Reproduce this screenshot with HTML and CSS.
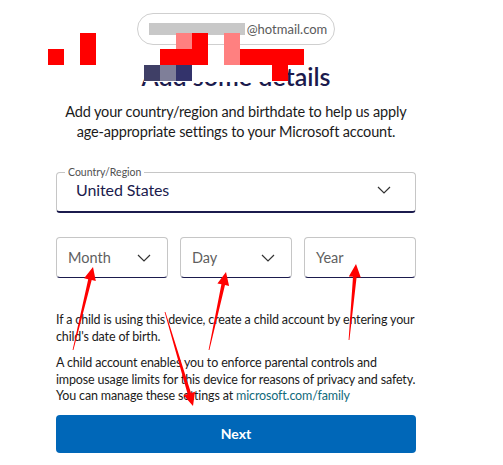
FILE: index.html
```html
<!DOCTYPE html>
<html lang="en">
  <head>
    <meta charset="UTF-8" />
    <title>Add details</title>
    <link rel="stylesheet" href="styles.css">
  </head>
  <body>
    <div class="page">
      <div class="identity">
        <span class="identity-hidden"></span>
        <span class="identity-mail">@hotmail.com</span>
      </div>

      <h1 class="title">Add some details</h1>

      <p class="intro">
        Add your country/region and birthdate to help us apply
        age-appropriate settings to your Microsoft account.
      </p>

      <fieldset class="country">
        <legend>Country/Region</legend>
        <div class="country-row">
          <span class="country-value">United States</span>
          <svg class="chevron" width="14" height="8" viewBox="0 0 14 8"><path d="M1 1l6 6 6-6" /></svg>
        </div>
      </fieldset>

      <div class="birth">
        <div class="birth-field">
          <span>Month</span>
          <svg class="chevron" width="14" height="8" viewBox="0 0 14 8"><path d="M1 1l6 6 6-6" /></svg>
        </div>
        <div class="birth-field">
          <span>Day</span>
          <svg class="chevron" width="14" height="8" viewBox="0 0 14 8"><path d="M1 1l6 6 6-6" /></svg>
        </div>
        <div class="birth-field">
          <span>Year</span>
        </div>
      </div>

      <p class="note note-first">
        If a child is using this device, create a child account by entering your
        child's date of birth.
      </p>
      <p class="note">
        A child account enables you to enforce parental controls and<br>
        impose usage limits for this device for reasons of privacy and safety.<br>
        You can manage these settings at <a href="#">microsoft.com/family</a>
      </p>

      <button class="next">Next</button>
    </div>

    <!-- redaction blocks laid over the header -->
    <div class="redact">
      <i style="left:48px;top:49px;width:16px;height:16px;background:#ff0000"></i>
      <i style="left:80px;top:33px;width:16px;height:32px;background:#ff0000"></i>
      <i style="left:144px;top:49px;width:144px;height:33px;background:#fff"></i>
      <i style="left:160px;top:49px;width:16px;height:16px;background:#ff0000"></i>
      <i style="left:176px;top:33px;width:16px;height:16px;background:#ff8080"></i>
      <i style="left:176px;top:49px;width:16px;height:16px;background:#ff0000"></i>
      <i style="left:192px;top:33px;width:16px;height:32px;background:#ff0000"></i>
      <i style="left:224px;top:33px;width:16px;height:32px;background:#ff8080"></i>
      <i style="left:240px;top:49px;width:64px;height:16px;background:#ff0000"></i>
      <i style="left:272px;top:65px;width:16px;height:16px;background:#ff0000"></i>
      <i style="left:144px;top:65px;width:16px;height:16px;background:#3f3f66"></i>
      <i style="left:160px;top:65px;width:16px;height:16px;background:#7f7f99"></i>
      <i style="left:176px;top:65px;width:16px;height:16px;background:#33336b"></i>
    </div>

    <!-- red annotation arrows -->
    <svg class="arrows" width="503" height="465" viewBox="0 0 503 465">
      <polygon points="93,267 95.8,281 91.7,280.1 73.4,350.1 72.6,349.9 88.2,279.2 84.1,278.2" />
      <polygon points="226,272 229.1,286 225,285.1 209.4,350.1 208.6,349.9 221.4,284.3 217.4,283.4" />
      <polygon points="356,264 360.8,277.5 356.6,277.2 349.4,340 348.6,340 353,276.8 348.8,276.4" />
      <polygon points="193,406 183.6,395.2 187.6,394 164.6,312.1 165.4,311.9 191,393 195,391.8" />
    </svg>
  </body>
</html>
```

FILE: styles.css
```css
body {
  margin: 0;
  background-color: #fff;
  font-family: Lato, "Noto Sans", sans-serif;
  color: #1b1b1b;
}
.page {
  width: 360px;
  margin-left: 56px;
  padding-top: 13px;
  display: flex;
  flex-direction: column;
}
.identity {
  align-self: center;
  display: flex;
  align-items: center;
  height: 30px;
  padding: 0 7px 0 11px;
  border: 1px solid #cfcfcf;
  border-radius: 16px;
  font-size: 13px;
  color: #5a5a5a;
}
.identity-hidden {
  width: 96px;
  height: 12px;
  background-color: #c8c8c8;
  margin-right: 2px;
}
.title {
  margin: 16px 0 0;
  text-align: center;
  font-size: 25px;
  line-height: 30px;
  font-weight: 600;
  color: #1b1b4d;
}
.intro {
  margin: 11px 0 0;
  text-align: center;
  font-size: 14.5px;
  line-height: 20px;
  letter-spacing: -0.15px;
}
.country {
  margin: 24px 0 0;
  padding: 0 24px 10px 8px;
  border: 1px solid #c6c6c6;
  border-bottom: 2px solid #1b1b4d;
  border-radius: 4px;
}
.country legend {
  padding: 0 3px;
  font-size: 10.5px;
  line-height: 12px;
  color: #505050;
}
.country-row {
  display: flex;
  align-items: center;
  justify-content: space-between;
  padding-left: 11px;
  height: 23px;
}
.country-value {
  font-size: 16px;
  letter-spacing: -0.1px;
  color: #1b1b4d;
}
.chevron path {
  fill: none;
  stroke: #333;
  stroke-width: 1.2;
}
.birth {
  display: grid;
  grid-template-columns: repeat(3, 1fr);
  gap: 12px;
  margin-top: 24px;
}
.birth-field {
  display: flex;
  align-items: center;
  justify-content: space-between;
  height: 39px;
  padding: 0 16px 0 11px;
  border: 1px solid #c6c6c6;
  border-bottom-color: #1b1b4d;
  border-radius: 4px;
  font-size: 14.5px;
  color: #5f5f5f;
}
.note {
  margin: 10px 0 0;
  font-size: 12.5px;
  line-height: 16.5px;
  letter-spacing: -0.15px;
  white-space: nowrap;
}
.note-first {
  margin-top: 34px;
  white-space: normal;
}
.note a {
  color: #116a7b;
  text-decoration: none;
}
.next {
  margin-top: 10px;
  height: 38px;
  border: none;
  border-radius: 4px;
  background-color: #0067b8;
  color: #fff;
  font-family: inherit;
  font-size: 14px;
  font-weight: bold;
}
.redact i {
  position: absolute;
  display: block;
}
.arrows {
  position: absolute;
  left: 0;
  top: 0;
}
.arrows polygon {
  fill: #ff0000;
}
```
